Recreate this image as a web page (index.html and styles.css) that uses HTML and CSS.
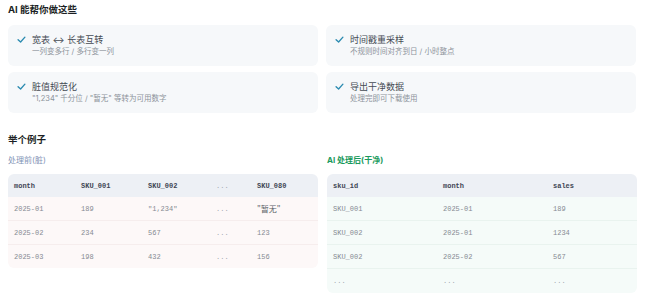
FILE: index.html
```html
<!DOCTYPE html>
<html lang="zh">
<head>
<meta charset="utf-8">
<link rel="stylesheet" href="styles.css">
</head>
<body>
<div class="page">
  <h2 class="title">AI 能帮你做这些</h2>
  <div class="cards">
    <div class="card">
      <svg class="check" viewBox="0 0 10 10"><path d="M1.2 5.2 L4 7.8 L8.8 2.4" /></svg>
      <div class="card-body">
        <div class="card-title">宽表 ↔ 长表互转</div>
        <div class="card-sub">一列变多行 / 多行变一列</div>
      </div>
    </div>
    <div class="card">
      <svg class="check" viewBox="0 0 10 10"><path d="M1.2 5.2 L4 7.8 L8.8 2.4" /></svg>
      <div class="card-body">
        <div class="card-title">时间戳重采样</div>
        <div class="card-sub">不规则时间对齐到日 / 小时整点</div>
      </div>
    </div>
    <div class="card">
      <svg class="check" viewBox="0 0 10 10"><path d="M1.2 5.2 L4 7.8 L8.8 2.4" /></svg>
      <div class="card-body">
        <div class="card-title">脏值规范化</div>
        <div class="card-sub">"1,234" 千分位 / "暂无" 等转为可用数字</div>
      </div>
    </div>
    <div class="card">
      <svg class="check" viewBox="0 0 10 10"><path d="M1.2 5.2 L4 7.8 L8.8 2.4" /></svg>
      <div class="card-body">
        <div class="card-title">导出干净数据</div>
        <div class="card-sub">处理完即可下载使用</div>
      </div>
    </div>
  </div>

  <h2 class="title example">举个例子</h2>
  <div class="examples">
    <div class="example-col">
      <div class="label dirty">处理前(脏)</div>
      <table class="tbl tbl-dirty">
        <colgroup><col class="c67"><col class="c67"><col class="c68"><col class="c41"><col></colgroup>
        <thead><tr><th>month</th><th>SKU_001</th><th>SKU_002</th><th class="dots">...</th><th>SKU_080</th></tr></thead>
        <tbody>
          <tr><td>2025-01</td><td>189</td><td>"1,234"</td><td class="dots">...</td><td class="cjk">"暂无"</td></tr>
          <tr><td>2025-02</td><td>234</td><td>567</td><td class="dots">...</td><td>123</td></tr>
          <tr><td>2025-03</td><td>198</td><td>432</td><td class="dots">...</td><td>156</td></tr>
        </tbody>
      </table>
    </div>
    <div class="example-col">
      <div class="label clean">AI 处理后(干净)</div>
      <table class="tbl tbl-clean">
        <colgroup><col class="c110"><col class="c110"><col></colgroup>
        <thead><tr><th>sku_id</th><th>month</th><th>sales</th></tr></thead>
        <tbody>
          <tr><td>SKU_001</td><td>2025-01</td><td>189</td></tr>
          <tr><td>SKU_002</td><td>2025-01</td><td>1234</td></tr>
          <tr><td>SKU_002</td><td>2025-02</td><td>567</td></tr>
          <tr><td class="dots">...</td><td class="dots">...</td><td class="dots">...</td></tr>
        </tbody>
      </table>
    </div>
  </div>
</div>
</body>
</html>
```

FILE: styles.css
```css
* { box-sizing: border-box; }
html, body { margin: 0; padding: 0; background: #ffffff; }
body {
  font-family: "Inter", "Noto Sans CJK SC", sans-serif;
  color: #1f2329;
}
.page {
  width: 628px;
  margin-left: 8px;
  padding-top: 3px;
}
.title {
  margin: 0;
  font-size: 9.5px;
  line-height: 14px;
  font-weight: 700;
  color: #1b1f24;
}
.cards {
  margin-top: 8px;
  display: grid;
  grid-template-columns: 310px 310px;
  column-gap: 8px;
  row-gap: 6px;
}
.card {
  background: #f6f8fa;
  border-radius: 6px;
  padding: 8px 10px 8px 9px;
  display: flex;
  gap: 6px;
  align-items: flex-start;
}
.check {
  width: 9px;
  height: 9px;
  margin-top: 2px;
  flex: none;
  fill: none;
  stroke: #2b8bb0;
  stroke-width: 1.5;
  stroke-linecap: round;
  stroke-linejoin: round;
}
.card-title {
  font-size: 9px;
  line-height: 13px;
  font-weight: 400;
  color: #454b54;
}
.card-sub {
  font-size: 7.5px;
  line-height: 12px;
  color: #8d939b;
}
.example { margin-top: 20px; }
.examples {
  margin-top: 7px;
  display: grid;
  grid-template-columns: 310px 310px;
  column-gap: 9px;
}
.label {
  font-size: 8px;
  line-height: 12px;
  margin-bottom: 8px;
}
.label.dirty { color: #8293b6; }
.label.clean { color: #1a9a5c; font-weight: 700; }
.tbl {
  width: 310px;
  table-layout: fixed;
  border-collapse: separate;
  border-spacing: 0;
  border-radius: 6px;
  overflow: hidden;
  font-family: "Liberation Mono", "Noto Sans CJK SC", monospace;
  font-size: 7px;
}
.c67 { width: 67px; }
.c68 { width: 68px; }
.c41 { width: 41px; }
.c110 { width: 110px; }
.tbl th {
  background: #edf0f5;
  height: 23px;
  padding: 0 6px;
  text-align: left;
  font-weight: 700;
  color: #3f4654;
}
.tbl td {
  height: 24px;
  padding: 0 6px;
  text-align: left;
  color: #858a92;
  border-bottom: 1px solid transparent;
}
.tbl-dirty td { background: #fdf8f8; border-bottom-color: #f6eded; }
.tbl-dirty tr:last-child td { border-bottom: none; height: 23px; }
.tbl-clean td { background: #f5fbf9; border-bottom-color: #e9f3ef; }
.tbl-clean tr:last-child td { border-bottom: none; }
.tbl th.dots { color: #a0a6ae; font-weight: 400; }
.tbl td.dots { color: #a0a6ae; }
.tbl td.cjk { font-family: "Noto Sans CJK SC", sans-serif; font-size: 8px; color: #5a5f67; }
```
